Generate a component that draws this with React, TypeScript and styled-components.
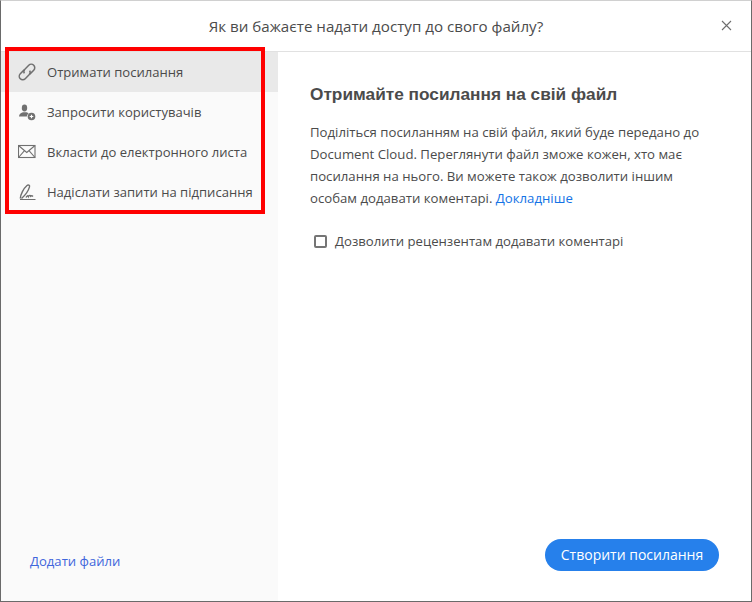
import React from "react";
import styled, { createGlobalStyle } from "styled-components";

const Global = createGlobalStyle`
  html, body { margin: 0; padding: 0; background: #fff; }
  body { font-family: "Open Sans", "Noto Sans", sans-serif; }
`;

const Dialog = styled.div`
  position: relative;
  box-sizing: border-box;
  width: 752px;
  height: 602px;
  display: flex;
  flex-direction: column;
  background: #fff;
  border: 1px solid #6a6a6a;
  border-top-color: #d0d0d0;
  overflow: hidden;
`;

const Header = styled.header`
  position: relative;
  flex: 0 0 51px;
  box-sizing: border-box;
  height: 51px;
  display: flex;
  align-items: center;
  justify-content: center;
  border-bottom: 1px solid #e1e1e1;
`;

const Title = styled.h1`
  margin: 0;
  font-size: 15.15px;
  font-weight: 400;
  color: #4b4b4b;
`;

const Close = styled.button`
  position: absolute;
  right: 19px;
  top: 19px;
  width: 11px;
  height: 11px;
  padding: 0;
  border: 0;
  background: none;
  display: flex;
`;

const Body = styled.div`
  flex: 1;
  display: flex;
  min-height: 0;
`;

const Sidebar = styled.nav`
  flex: 0 0 277px;
  display: flex;
  flex-direction: column;
  justify-content: space-between;
  background: #fafafa;
`;

const Menu = styled.ul`
  list-style: none;
  margin: 0;
  padding: 0;
`;

const MenuItem = styled.li<{ $active?: boolean }>`
  height: 40px;
  display: flex;
  align-items: center;
  padding-left: 17px;
  gap: 11px;
  font-size: 13.05px;
  color: #4b4b4b;
  background: ${(p) => (p.$active ? "#e9e9e9" : "transparent")};
  white-space: nowrap;
`;

const IconBox = styled.span`
  width: 18px;
  height: 18px;
  flex: none;
  display: flex;
`;

const AddFiles = styled.a`
  margin: 0 0 31px 29px;
  font-size: 13.1px;
  color: #3f66dc;
`;

const Main = styled.main`
  flex: 1;
  display: flex;
  flex-direction: column;
  padding: 29px 32px 30px;
  min-width: 0;
`;

const Heading = styled.h2`
  margin: 0 0 14px;
  font-family: "Liberation Sans", Arial, sans-serif;
  font-size: 17.25px;
  line-height: 26px;
  font-weight: 700;
  color: #4b4b4b;
`;

const Paragraph = styled.p`
  margin: 0 0 22px;
  width: 400px;
  font-size: 13.2px;
  line-height: 22px;
  color: #4b4b4b;
`;

const Link = styled.a`
  color: #1473e6;
`;

const CheckRow = styled.label`
  display: flex;
  align-items: center;
  gap: 8px;
  padding-left: 4px;
  height: 20px;
  font-size: 13.15px;
  color: #4b4b4b;
`;

const Box = styled.span`
  box-sizing: border-box;
  width: 13px;
  height: 13px;
  border: 2px solid #757575;
  border-radius: 2px;
  background: #fff;
`;

const Footer = styled.div`
  margin-top: auto;
  display: flex;
  justify-content: flex-end;
`;

const Primary = styled.button`
  width: 174px;
  height: 32px;
  padding: 0 0 1px;
  border: 0;
  border-radius: 16px;
  background: #2680eb;
  color: #fff;
  font-family: inherit;
  font-size: 14px;
`;

const Highlight = styled.div`
  position: absolute;
  left: 4px;
  top: 46px;
  width: 252px;
  height: 159px;
  border: 4px solid #ff0000;
  pointer-events: none;
`;

const stroke = { fill: "none", stroke: "#707070", strokeWidth: 1.4 };

const LinkIcon = () => (
  <svg width="18" height="18" viewBox="0 0 18 18">
    <g {...stroke} strokeWidth={1.5} transform="rotate(-45 9 9)">
      <path d="M8.500 5.500H3a3.500 3.500 0 0 0 0 7H8.500a3.500 3.500 0 0 0 3.300-2.500" />
      <path d="M9.500 12.500H15a3.500 3.500 0 0 0 0-7H9.500a3.500 3.500 0 0 0-3.300 2.500" />
    </g>
  </svg>
);

const UserIcon = () => (
  <svg width="18" height="18" viewBox="0 0 18 18">
    <ellipse cx="6.500" cy="5" rx="2.700" ry="3.400" fill="#707070" />
    <path d="M1 13.500c0-2.600 2.500-3.700 4-4.200h3.500c1 .3 1.700.7 2.100 1.200A4.600 4.600 0 0 0 8.800 13.500z" fill="#707070" />
    <circle cx="13.500" cy="13.500" r="3.800" fill="#707070" />
    <path d="M13.500 11.700v3.600M11.700 13.500h3.600" stroke="#fff" strokeWidth="1.200" />
  </svg>
);

const MailIcon = () => (
  <svg width="18" height="18" viewBox="0 0 18 18">
    <g {...stroke} strokeWidth={1.1}>
      <rect x="0.500" y="2.500" width="16.500" height="12" />
      <path d="M.5 2.500 8.750 9.500 17 2.500M.5 14.500 6.500 7.700M17 14.500 11 7.700" />
    </g>
  </svg>
);

const SignIcon = () => (
  <svg width="18" height="18" viewBox="0 0 18 18">
    <g {...stroke}>
      <path d="M2.300 15.500C2.500 11.500 5.500 5.500 9 2.500c1.300-1.100 3-.1 2.500 1.400C10.500 7.500 7.500 12 3.500 15.500" />
      <path d="M8 14.500c1-1.800 2.200-2.300 2.500-1 .8-1.500 1.800-1.500 2.200-.2.800-.7 1.500-.6 2.300.2" />
      <path d="M2 16.500H17.500" strokeWidth="1" />
    </g>
  </svg>
);

const items = [
  { label: "Отримати посилання", icon: <LinkIcon />, active: true },
  { label: "Запросити користувачів", icon: <UserIcon /> },
  { label: "Вкласти до електронного листа", icon: <MailIcon /> },
  { label: "Надіслати запити на підписання", icon: <SignIcon /> },
];

export default function App() {
  return (
    <>
      <Global />
      <Dialog>
        <Header>
          <Title>Як ви бажаєте надати доступ до свого файлу?</Title>
          <Close aria-label="Закрити">
            <svg width="11" height="11" viewBox="0 0 11 11">
              <path d="M1 1l9 9M10 1l-9 9" stroke="#6e6e6e" strokeWidth="1.1" fill="none" />
            </svg>
          </Close>
        </Header>
        <Body>
          <Sidebar>
            <Menu>
              {items.map((it) => (
                <MenuItem key={it.label} $active={it.active}>
                  <IconBox>{it.icon}</IconBox>
                  {it.label}
                </MenuItem>
              ))}
            </Menu>
            <AddFiles>Додати файли</AddFiles>
          </Sidebar>
          <Main>
            <Heading>Отримайте посилання на свій файл</Heading>
            <Paragraph>
              Поділіться посиланням на свій файл, який буде передано до Document Cloud. Переглянути файл зможе кожен, хто має посилання на нього. Ви можете також дозволити іншим особам додавати коментарі. <Link>Докладніше</Link>
            </Paragraph>
            <CheckRow>
              <Box />
              Дозволити рецензентам додавати коментарі
            </CheckRow>
            <Footer>
              <Primary>Створити посилання</Primary>
            </Footer>
          </Main>
        </Body>
        <Highlight />
      </Dialog>
    </>
  );
}
